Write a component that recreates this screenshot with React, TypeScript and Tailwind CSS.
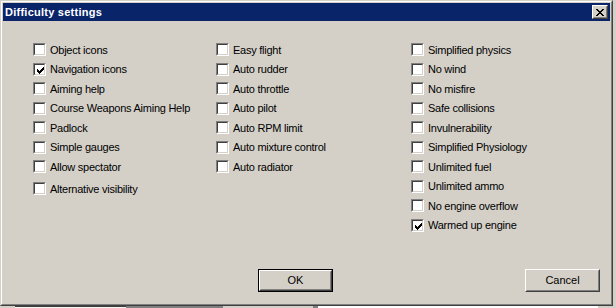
import React from "react";

const col1 = [
  { label: "Object icons" },
  { label: "Navigation icons", checked: true },
  { label: "Aiming help" },
  { label: "Course Weapons Aiming Help" },
  { label: "Padlock" },
  { label: "Simple gauges" },
  { label: "Allow spectator" },
];

const col2 = [
  { label: "Easy flight" },
  { label: "Auto rudder" },
  { label: "Auto throttle" },
  { label: "Auto pilot" },
  { label: "Auto RPM limit" },
  { label: "Auto mixture control" },
  { label: "Auto radiator" },
];

const col3 = [
  { label: "Simplified physics" },
  { label: "No wind" },
  { label: "No misfire" },
  { label: "Safe collisions" },
  { label: "Invulnerability" },
  { label: "Simplified Physiology" },
  { label: "Unlimited fuel" },
  { label: "Unlimited ammo" },
  { label: "No engine overflow" },
  { label: "Warmed up engine", checked: true },
];

// classic 7x7 check: each column is 3px tall
const checkCols = [2, 3, 4, 3, 2, 1, 0];
// marlett-ish close X, 8x7
const xRows = ["XX....XX", ".XX..XX.", "..XXXX..", "...XX...", "..XXXX..", ".XX..XX.", "XX....XX"];

function Check({ checked }: { checked?: boolean }) {
  return (
    <span className="block w-[13px] h-[13px] shrink-0 border border-t-[#808080] border-l-[#808080] border-b-white border-r-white">
      <span className="block w-full h-full border border-t-[#404040] border-l-[#404040] border-b-[#d4d0c8] border-r-[#d4d0c8] bg-white">
        {checked && (
          <svg width="7" height="7" viewBox="0 0 7 7" className="ml-[2px] mt-[2px]" shapeRendering="crispEdges">
            {checkCols.map((y, x) => (
              <rect key={x} x={x} y={y} width="1" height="3" fill="#000" />
            ))}
          </svg>
        )}
      </span>
    </span>
  );
}

function Row({ label, checked, extra }: { label: string; checked?: boolean; extra?: string }) {
  return (
    <div className={`flex items-center gap-[4px] h-[19.5px] ${extra ?? ""}`}>
      <Check checked={checked} />
      <span className="whitespace-nowrap">{label}</span>
    </div>
  );
}

export default function App() {
  return (
    <div
      className="w-[616px] h-[308px] bg-[#d4d0c8] overflow-hidden flex flex-col text-black text-[11px] tracking-[-0.25px]"
      style={{ fontFamily: '"Liberation Sans", Arial, sans-serif' }}
    >
      <div className="flex h-[306px]">
        {/* dialog window */}
        <div className="w-[613px] h-full border border-t-[#d4d0c8] border-l-[#d4d0c8] border-b-[#404040] border-r-[#404040]">
          <div className="h-full border border-t-white border-l-white border-b-[#808080] border-r-[#808080] p-[1px] flex flex-col">
            {/* title bar */}
            <div className="h-[18px] bg-[#0a246a] flex items-center justify-between pl-[2px] pr-[2px]">
              <span className="text-white font-bold tracking-[0.25px] leading-none">Difficulty settings</span>
              <div className="w-[16px] h-[14px] border border-t-white border-l-white border-b-[#404040] border-r-[#404040] bg-[#d4d0c8]">
                <div className="w-full h-full border border-transparent border-b-[#808080] border-r-[#808080] flex items-center justify-center">
                  <svg width="8" height="7" viewBox="0 0 8 7" shapeRendering="crispEdges">
                    {xRows.map((r, y) =>
                      r.split("").map((c, x) =>
                        c === "X" ? <rect key={`${x}-${y}`} x={x} y={y} width="1" height="1" fill="#000" /> : null
                      )
                    )}
                  </svg>
                </div>
              </div>
            </div>

            {/* options */}
            <div className="flex pt-[19px] pl-[30px]">
              <div className="w-[183px] flex flex-col">
                {col1.map((o) => (
                  <Row key={o.label} label={o.label} checked={o.checked} />
                ))}
                <Row label="Alternative visibility" extra="mt-[2.5px]" />
              </div>
              <div className="w-[195px] flex flex-col">
                {col2.map((o) => (
                  <Row key={o.label} label={o.label} />
                ))}
              </div>
              <div className="flex flex-col">
                {col3.map((o) => (
                  <Row key={o.label} label={o.label} checked={o.checked} />
                ))}
              </div>
            </div>

            {/* buttons */}
            <div className="flex gap-[192px] pl-[255px] mt-[34px] tracking-normal">
              <button className="w-[75px] h-[23px] border border-black bg-[#d4d0c8] p-0">
                <div className="w-full h-full border border-t-white border-l-white border-b-[#404040] border-r-[#404040]">
                  <div className="w-full h-full border border-transparent border-b-[#808080] border-r-[#808080] flex items-center justify-center">
                    OK
                  </div>
                </div>
              </button>
              <button className="w-[75px] h-[23px] border border-t-white border-l-white border-b-[#404040] border-r-[#404040] bg-[#d4d0c8] p-0">
                <div className="w-full h-full border border-transparent border-b-[#808080] border-r-[#808080] flex items-center justify-center">
                  Cancel
                </div>
              </button>
            </div>
          </div>
        </div>
        {/* window behind, right edge */}
        <div className="flex-1 bg-[#d4d0c8]" />
      </div>
      {/* window behind, bottom edge */}
      <div className="flex h-[2px]">
        <div className="w-[15px] bg-[#d4d0c8]" />
        <div className="w-[111px] bg-[#f4f3ee] border-t border-[#404040]" />
        <div className="w-[97px] bg-[#808080]" />
        <div className="w-[90px] bg-[#d4d0c8]" />
        <div className="w-[5px] bg-[#808080]" />
        <div className="w-[280px] bg-white" />
        <div className="flex-1 bg-[#d4d0c8]" />
      </div>
    </div>
  );
}
